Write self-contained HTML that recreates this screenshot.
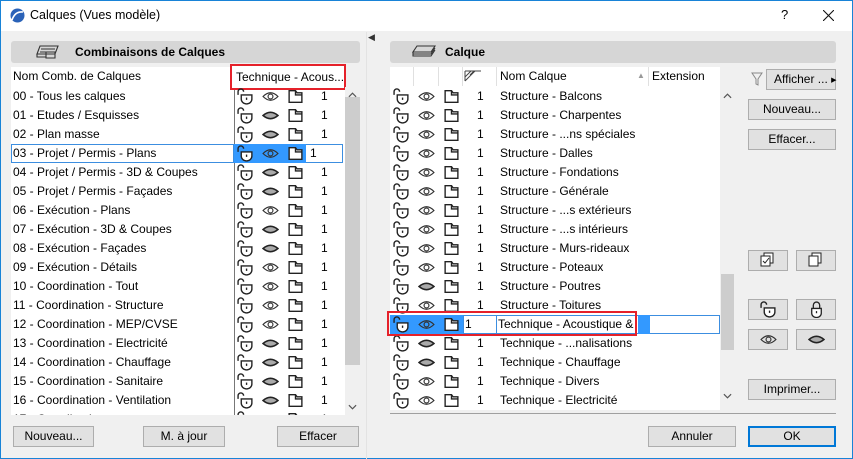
<!DOCTYPE html>
<html><head><meta charset="utf-8"><style>
*{margin:0;padding:0;box-sizing:border-box}
body{width:853px;height:459px;overflow:hidden;background:#f0f0f0;font-family:"Liberation Sans",sans-serif;font-size:12px;color:#000;position:relative}
.a{position:absolute}
.win{position:absolute;left:0;top:0;width:853px;height:459px;border:1px solid #1883d7}
.title{left:1px;top:1px;width:851px;height:30px;background:#fff}
.hdr{background:#d6d6d6;border-radius:3px;height:22px}
.list{background:#fff;overflow:hidden}
.row{position:absolute;left:0;height:19px;line-height:19px;white-space:nowrap}
.btn{position:absolute;background:#e1e1e1;border:1px solid #adadad;text-align:center;line-height:19px;height:21px;white-space:nowrap}
.ic{position:absolute;width:17px;height:17px}
.sb{background:#f0f0f0}
.thumb{background:#cdcdcd}
</style></head><body>
<svg width="0" height="0" style="position:absolute">
<defs>
<symbol id="lk" viewBox="0 0 16 16"><path d="M1 6.5V3.5a2.6 2.6 0 0 1 5.2 0" fill="none" stroke="#222" stroke-width="1.3"/><path d="M4 6.5h10v4a5 4.5 0 0 1-10 0z" fill="#fff" stroke="#222" stroke-width="1.3"/><path d="M9 9v2.2" stroke="#222" stroke-width="1.3"/></symbol>
<symbol id="lkc" viewBox="0 0 16 16"><path d="M5 7V4a3 3 0 0 1 6 0v3" fill="none" stroke="#222" stroke-width="1.2"/><path d="M3.5 7h9v4.5a4.5 4 0 0 1-9 0z" fill="#fff" stroke="#222" stroke-width="1.2"/><path d="M8 9.5v2" stroke="#222" stroke-width="1.2"/></symbol>
<symbol id="eo" viewBox="0 0 16 16"><path d="M1 8Q8 1 15 8Q8 15 1 8z" fill="none" stroke="#333" stroke-width="1.1"/><circle cx="8" cy="8" r="2.3" fill="none" stroke="#333" stroke-width="1.1"/></symbol>
<symbol id="ef" viewBox="0 0 16 16"><path d="M1 8Q8 2 15 8Q8 14 1 8z" fill="#aaa" stroke="#222" stroke-width="1.4"/></symbol>
<symbol id="fl" viewBox="0 0 16 16"><path d="M2 2.5h6l1.5 2h4.5v9H2z" fill="#fff" stroke="#222" stroke-width="1.3"/><path d="M8 2.5v4h6" fill="none" stroke="#222" stroke-width="1.3"/></symbol>
<symbol id="up" viewBox="0 0 10 6"><path d="M1 5L5 1L9 5" fill="none" stroke="#555" stroke-width="1.3"/></symbol>
<symbol id="dn" viewBox="0 0 10 6"><path d="M1 1L5 5L9 1" fill="none" stroke="#555" stroke-width="1.3"/></symbol>
</defs></svg>
<div class="win"></div>
<div class="a title"></div>
<svg class="a" style="left:10px;top:8px" width="15" height="15" viewBox="0 0 15 15"><circle cx="7.5" cy="7.5" r="7" fill="#2a62b8"/><path d="M2 12Q5 3 13 4" fill="none" stroke="#fff" stroke-width="1.6"/></svg>
<div class="a" style="left:30px;top:8px;font-size:12.5px">Calques (Vues modèle)</div>
<div class="a" style="left:781px;top:7px;font-size:13px">?</div>
<svg class="a" style="left:823px;top:10px" width="11" height="11"><path d="M0 0L11 11M11 0L0 11" stroke="#111" stroke-width="1.1"/></svg>

<!-- left panel -->
<div class="a hdr" style="left:11px;top:41px;width:349px"></div>
<svg class="a" style="left:36px;top:44px" width="28" height="16" viewBox="0 0 28 16"><path d="M4 2h18l-3 8H1zM1 10v3h9M10 8h9v6h-9z" fill="none" stroke="#333" stroke-width="1.1"/><path d="M5 5h14M4 8h13" stroke="#333"/></svg>
<div class="a" style="left:75px;top:45px;font-weight:bold">Combinaisons de Calques</div>
<div class="a list" style="left:11px;top:67px;width:334px;height:348px">
<div class="row" style="top:0;left:2px">Nom Comb. de Calques</div>
<div class="a" style="left:223px;top:20px;width:1px;height:330px;background:#777"></div>
</div>
<div class="a" style="left:230px;top:64px;width:116px;height:26px;border:2px solid #e5212a;background:#fff"></div>
<div class="a" style="left:236px;top:70px">Technique - Acous...</div>
<div class="a sb" style="left:345px;top:87px;width:15px;height:328px"></div>
<div class="a thumb" style="left:345px;top:97px;width:15px;height:268px"></div>
<svg class="a" style="left:348px;top:92px" width="9" height="6"><use href="#up"/></svg>
<svg class="a" style="left:348px;top:404px" width="9" height="6"><use href="#dn"/></svg>
<div class="btn" style="left:13px;top:426px;width:81px">Nouveau...</div>
<div class="btn" style="left:143px;top:426px;width:82px">M. à jour</div>
<div class="btn" style="left:277px;top:426px;width:82px">Effacer</div>

<div class="a" style="left:366px;top:32px;width:1px;height:427px;background:#e3e3e3"></div>
<div class="a" style="left:368px;top:32px;font-size:9px;color:#333">◀</div>

<!-- right panel -->
<div class="a hdr" style="left:390px;top:41px;width:446px"></div>
<svg class="a" style="left:411px;top:44px" width="26" height="16" viewBox="0 0 26 16"><path d="M6 2h18l-4 6H2z M2 8v2h18l4-6 M2 10v2h18l4-6" fill="none" stroke="#333" stroke-width="1.1"/></svg>
<div class="a" style="left:445px;top:45px;font-weight:bold">Calque</div>
<div class="a list" style="left:390px;top:67px;width:330px;height:343px">
<div class="a" style="left:23px;top:0;width:1px;height:19px;background:#e0e0e0"></div>
<div class="a" style="left:48px;top:0;width:1px;height:19px;background:#e0e0e0"></div>
<div class="a" style="left:72px;top:0;width:1px;height:19px;background:#e0e0e0"></div>
<div class="a" style="left:106px;top:0;width:1px;height:19px;background:#e0e0e0"></div>
<div class="a" style="left:258px;top:0;width:1px;height:19px;background:#e0e0e0"></div>
<svg class="a" style="left:74px;top:3px" width="18" height="12"><path d="M1 1h16M1 1v10M1 7l6-6M1 11l10-10M6 5l4-4M11 1l-5 5" stroke="#444" stroke-width="1"/></svg>
<div class="row" style="left:110px;top:0">Nom Calque</div>
<div class="a" style="left:247px;top:4px;font-size:8px;color:#999">▲</div>
<div class="row" style="left:262px;top:0">Extension</div>
</div>
<div class="a sb" style="left:720px;top:87px;width:15px;height:323px"></div>
<div class="a thumb" style="left:721px;top:274px;width:13px;height:76px"></div>
<svg class="a" style="left:723px;top:93px" width="9" height="6"><use href="#up"/></svg>
<svg class="a" style="left:723px;top:393px" width="9" height="6"><use href="#dn"/></svg>

<svg class="a" style="left:751px;top:72px" width="12" height="14"><path d="M1 1h10L7 7v6L5 12V7z" fill="none" stroke="#888"/></svg>
<div class="btn" style="left:766px;top:69px;width:70px;text-align:left;padding-left:7px">Afficher ... <span style="font-size:7px;position:relative;top:-1px">▶</span></div>
<div class="btn" style="left:748px;top:99px;width:88px">Nouveau...</div>
<div class="btn" style="left:748px;top:129px;width:88px">Effacer...</div>
<div class="btn" style="left:748px;top:250px;width:40px"></div>
<div class="btn" style="left:796px;top:250px;width:40px"></div>
<svg class="a" style="left:760px;top:252px" width="16" height="16"><rect x="4" y="1" width="9" height="10" fill="#fff" stroke="#222"/><rect x="1" y="4" width="9" height="10" fill="#fff" stroke="#222"/><path d="M3 9l2 2 4-5" stroke="#222" fill="none"/></svg>
<svg class="a" style="left:808px;top:252px" width="16" height="16"><rect x="4" y="1" width="9" height="10" fill="#fff" stroke="#222"/><rect x="1" y="4" width="9" height="10" fill="#fff" stroke="#222"/></svg>
<div class="btn" style="left:748px;top:299px;width:40px"></div>
<div class="btn" style="left:796px;top:299px;width:40px"></div>
<svg class="ic" style="left:760px;top:301px"><use href="#lk"/></svg>
<svg class="ic" style="left:808px;top:301px"><use href="#lkc"/></svg>
<div class="btn" style="left:748px;top:329px;width:40px"></div>
<div class="btn" style="left:796px;top:329px;width:40px"></div>
<svg class="ic" style="left:760px;top:331px"><use href="#eo"/></svg>
<svg class="ic" style="left:808px;top:331px"><use href="#ef"/></svg>
<div class="btn" style="left:748px;top:379px;width:88px">Imprimer...</div>
<div class="a" style="left:390px;top:413px;width:446px;height:1px;background:#a0a0a0"></div>
<div class="btn" style="left:648px;top:426px;width:88px">Annuler</div>
<div class="btn" style="left:748px;top:426px;width:88px;border:2px solid #0078d7;line-height:17px">OK</div>

<!-- left rows -->
<div class="a" style="left:11px;top:87px;width:334px;height:328px;overflow:hidden">
<div style="position:absolute;left:0;top:57px;width:223px;height:19px;border:1px solid #3c8ee0"></div>
<div style="position:absolute;left:223px;top:57px;width:72px;height:19px;background:#3399ff"></div>
<div style="position:absolute;left:295px;top:57px;width:37px;height:19px;border:1px solid #3c8ee0;border-left:none"></div>
<div class="row" style="top:0;left:2px">00 - Tous les calques</div>
<div class="row" style="top:19px;left:2px">01 - Etudes / Esquisses</div>
<div class="row" style="top:38px;left:2px">02 - Plan masse</div>
<div class="row" style="top:57px;left:2px">03 - Projet / Permis - Plans</div>
<div class="row" style="top:76px;left:2px">04 - Projet / Permis - 3D &amp; Coupes</div>
<div class="row" style="top:95px;left:2px">05 - Projet / Permis - Façades</div>
<div class="row" style="top:114px;left:2px">06 - Exécution - Plans</div>
<div class="row" style="top:133px;left:2px">07 - Exécution - 3D &amp; Coupes</div>
<div class="row" style="top:152px;left:2px">08 - Exécution - Façades</div>
<div class="row" style="top:171px;left:2px">09 - Exécution - Détails</div>
<div class="row" style="top:190px;left:2px">10 - Coordination - Tout</div>
<div class="row" style="top:209px;left:2px">11 - Coordination - Structure</div>
<div class="row" style="top:228px;left:2px">12 - Coordination - MEP/CVSE</div>
<div class="row" style="top:247px;left:2px">13 - Coordination - Electricité</div>
<div class="row" style="top:266px;left:2px">14 - Coordination - Chauffage</div>
<div class="row" style="top:285px;left:2px">15 - Coordination - Sanitaire</div>
<div class="row" style="top:304px;left:2px">16 - Coordination - Ventilation</div>
<div class="row" style="top:323px;left:2px">17 - Coordination - ...</div>
<div style="position:absolute;left:226px;top:0">
<svg class="ic" style="top:1px"><use href="#lk"/></svg><svg class="ic" style="top:20px"><use href="#lk"/></svg><svg class="ic" style="top:39px"><use href="#lk"/></svg><svg class="ic" style="top:58px"><use href="#lk"/></svg><svg class="ic" style="top:77px"><use href="#lk"/></svg><svg class="ic" style="top:96px"><use href="#lk"/></svg><svg class="ic" style="top:115px"><use href="#lk"/></svg><svg class="ic" style="top:134px"><use href="#lk"/></svg><svg class="ic" style="top:153px"><use href="#lk"/></svg><svg class="ic" style="top:172px"><use href="#lk"/></svg><svg class="ic" style="top:191px"><use href="#lk"/></svg><svg class="ic" style="top:210px"><use href="#lk"/></svg><svg class="ic" style="top:229px"><use href="#lk"/></svg><svg class="ic" style="top:248px"><use href="#lk"/></svg><svg class="ic" style="top:267px"><use href="#lk"/></svg><svg class="ic" style="top:286px"><use href="#lk"/></svg><svg class="ic" style="top:305px"><use href="#lk"/></svg><svg class="ic" style="top:324px"><use href="#lk"/></svg>
</div>
<div style="position:absolute;left:251px;top:0">
<svg class="ic" style="top:1px"><use href="#eo"/></svg><svg class="ic" style="top:20px"><use href="#ef"/></svg><svg class="ic" style="top:39px"><use href="#ef"/></svg><svg class="ic" style="top:58px"><use href="#eo"/></svg><svg class="ic" style="top:77px"><use href="#ef"/></svg><svg class="ic" style="top:96px"><use href="#ef"/></svg><svg class="ic" style="top:115px"><use href="#eo"/></svg><svg class="ic" style="top:134px"><use href="#ef"/></svg><svg class="ic" style="top:153px"><use href="#ef"/></svg><svg class="ic" style="top:172px"><use href="#eo"/></svg><svg class="ic" style="top:191px"><use href="#eo"/></svg><svg class="ic" style="top:210px"><use href="#eo"/></svg><svg class="ic" style="top:229px"><use href="#eo"/></svg><svg class="ic" style="top:248px"><use href="#ef"/></svg><svg class="ic" style="top:267px"><use href="#ef"/></svg><svg class="ic" style="top:286px"><use href="#ef"/></svg><svg class="ic" style="top:305px"><use href="#ef"/></svg><svg class="ic" style="top:324px"><use href="#ef"/></svg>
</div>
<div style="position:absolute;left:276px;top:0">
<svg class="ic" style="top:1px"><use href="#fl"/></svg><svg class="ic" style="top:20px"><use href="#fl"/></svg><svg class="ic" style="top:39px"><use href="#fl"/></svg><svg class="ic" style="top:58px"><use href="#fl"/></svg><svg class="ic" style="top:77px"><use href="#fl"/></svg><svg class="ic" style="top:96px"><use href="#fl"/></svg><svg class="ic" style="top:115px"><use href="#fl"/></svg><svg class="ic" style="top:134px"><use href="#fl"/></svg><svg class="ic" style="top:153px"><use href="#fl"/></svg><svg class="ic" style="top:172px"><use href="#fl"/></svg><svg class="ic" style="top:191px"><use href="#fl"/></svg><svg class="ic" style="top:210px"><use href="#fl"/></svg><svg class="ic" style="top:229px"><use href="#fl"/></svg><svg class="ic" style="top:248px"><use href="#fl"/></svg><svg class="ic" style="top:267px"><use href="#fl"/></svg><svg class="ic" style="top:286px"><use href="#fl"/></svg><svg class="ic" style="top:305px"><use href="#fl"/></svg><svg class="ic" style="top:324px"><use href="#fl"/></svg>
</div>
<div style="position:absolute;left:310px;top:0;line-height:19px">1<br>1<br>1<br><span style="position:relative;left:-11px">1</span><br>1<br>1<br>1<br>1<br>1<br>1<br>1<br>1<br>1<br>1<br>1<br>1<br>1<br>1</div>
</div>

<!-- right rows -->
<div class="a" style="left:390px;top:87px;width:330px;height:323px;overflow:hidden">
<div style="position:absolute;left:0;top:228px;width:73px;height:19px;background:#3399ff"></div>
<div style="position:absolute;left:73px;top:228px;width:257px;height:19px;border:1px solid #3c8ee0"></div>
<div style="position:absolute;left:106px;top:228px;width:1px;height:19px;background:#3c8ee0"></div>
<div style="position:absolute;left:248px;top:228px;width:12px;height:19px;background:#3399ff"></div>
<div style="position:absolute;left:110px;top:0;line-height:19px;white-space:nowrap">Structure - Balcons<br>Structure - Charpentes<br>Structure - ...ns spéciales<br>Structure - Dalles<br>Structure - Fondations<br>Structure - Générale<br>Structure - ...s extérieurs<br>Structure - ...s intérieurs<br>Structure - Murs-rideaux<br>Structure - Poteaux<br>Structure - Poutres<br>Structure - Toitures<br><span style="position:relative;left:-2px">Technique - Acoustique &amp;</span><br>Technique - ...nalisations<br>Technique - Chauffage<br>Technique - Divers<br>Technique - Electricité</div>
<div style="position:absolute;left:87px;top:0;line-height:19px">1<br>1<br>1<br>1<br>1<br>1<br>1<br>1<br>1<br>1<br>1<br>1<br><span style="position:relative;left:-12px">1</span><br>1<br>1<br>1<br>1</div>
<div style="position:absolute;left:3px;top:0">
<svg class="ic" style="top:1px"><use href="#lk"/></svg><svg class="ic" style="top:20px"><use href="#lk"/></svg><svg class="ic" style="top:39px"><use href="#lk"/></svg><svg class="ic" style="top:58px"><use href="#lk"/></svg><svg class="ic" style="top:77px"><use href="#lk"/></svg><svg class="ic" style="top:96px"><use href="#lk"/></svg><svg class="ic" style="top:115px"><use href="#lk"/></svg><svg class="ic" style="top:134px"><use href="#lk"/></svg><svg class="ic" style="top:153px"><use href="#lk"/></svg><svg class="ic" style="top:172px"><use href="#lk"/></svg><svg class="ic" style="top:191px"><use href="#lk"/></svg><svg class="ic" style="top:210px"><use href="#lk"/></svg><svg class="ic" style="top:229px"><use href="#lk"/></svg><svg class="ic" style="top:248px"><use href="#lk"/></svg><svg class="ic" style="top:267px"><use href="#lk"/></svg><svg class="ic" style="top:286px"><use href="#lk"/></svg><svg class="ic" style="top:305px"><use href="#lk"/></svg>
</div>
<div style="position:absolute;left:28px;top:0">
<svg class="ic" style="top:1px"><use href="#eo"/></svg><svg class="ic" style="top:20px"><use href="#eo"/></svg><svg class="ic" style="top:39px"><use href="#eo"/></svg><svg class="ic" style="top:58px"><use href="#eo"/></svg><svg class="ic" style="top:77px"><use href="#eo"/></svg><svg class="ic" style="top:96px"><use href="#eo"/></svg><svg class="ic" style="top:115px"><use href="#eo"/></svg><svg class="ic" style="top:134px"><use href="#eo"/></svg><svg class="ic" style="top:153px"><use href="#eo"/></svg><svg class="ic" style="top:172px"><use href="#eo"/></svg><svg class="ic" style="top:191px"><use href="#ef"/></svg><svg class="ic" style="top:210px"><use href="#eo"/></svg><svg class="ic" style="top:229px"><use href="#eo"/></svg><svg class="ic" style="top:248px"><use href="#ef"/></svg><svg class="ic" style="top:267px"><use href="#ef"/></svg><svg class="ic" style="top:286px"><use href="#eo"/></svg><svg class="ic" style="top:305px"><use href="#eo"/></svg>
</div>
<div style="position:absolute;left:53px;top:0">
<svg class="ic" style="top:1px"><use href="#fl"/></svg><svg class="ic" style="top:20px"><use href="#fl"/></svg><svg class="ic" style="top:39px"><use href="#fl"/></svg><svg class="ic" style="top:58px"><use href="#fl"/></svg><svg class="ic" style="top:77px"><use href="#fl"/></svg><svg class="ic" style="top:96px"><use href="#fl"/></svg><svg class="ic" style="top:115px"><use href="#fl"/></svg><svg class="ic" style="top:134px"><use href="#fl"/></svg><svg class="ic" style="top:153px"><use href="#fl"/></svg><svg class="ic" style="top:172px"><use href="#fl"/></svg><svg class="ic" style="top:191px"><use href="#fl"/></svg><svg class="ic" style="top:210px"><use href="#fl"/></svg><svg class="ic" style="top:229px"><use href="#fl"/></svg><svg class="ic" style="top:248px"><use href="#fl"/></svg><svg class="ic" style="top:267px"><use href="#fl"/></svg><svg class="ic" style="top:286px"><use href="#fl"/></svg><svg class="ic" style="top:305px"><use href="#fl"/></svg>
</div>
</div>
<div class="a" style="left:387px;top:311px;width:250px;height:25px;border:2px solid #e5212a"></div>
</body></html>
